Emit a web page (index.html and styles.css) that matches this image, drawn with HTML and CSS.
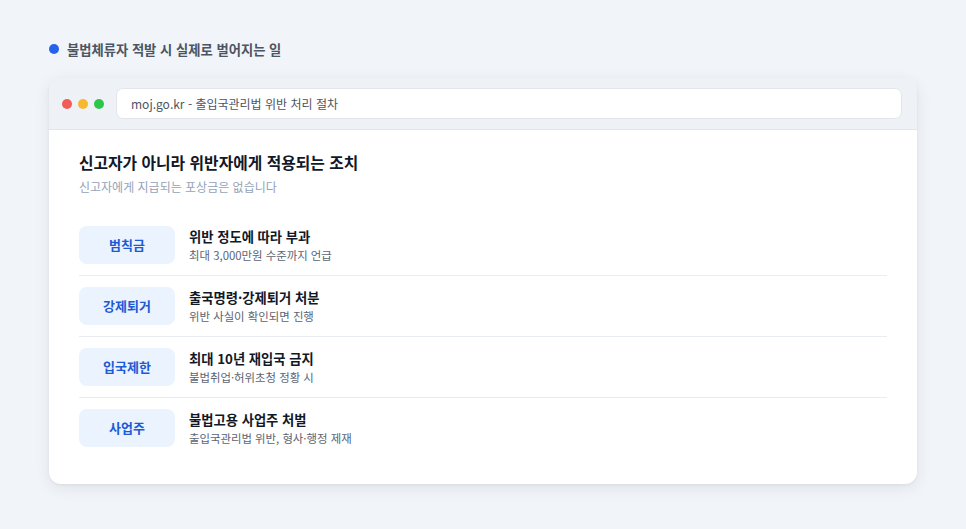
FILE: index.html
```html
<!DOCTYPE html>
<html lang="ko">
<head>
    <meta charset="UTF-8">
    <meta name="viewport" content="width=device-width, initial-scale=1.0">
    <title>불법체류자 적발 시 실제로 벌어지는 일</title>
    <link rel="stylesheet" href="styles.css">
</head>
<body>
<div class="label">
    <span class="label-dot"></span>
    <span>불법체류자 적발 시 실제로 벌어지는 일</span>
</div>

<div class="window">
    <div class="titlebar">
        <div class="dots">
            <span class="dot red"></span>
            <span class="dot yellow"></span>
            <span class="dot green"></span>
        </div>
        <div class="url">moj.go.kr - 출입국관리법 위반 처리 절차</div>
    </div>

    <div class="content">
        <h2>신고자가 아니라 위반자에게 적용되는 조치</h2>
        <p class="sub">신고자에게 지급되는 포상금은 없습니다</p>

        <ul class="rows">
            <li class="row">
                <span class="badge">범칙금</span>
                <div class="row-text">
                    <strong>위반 정도에 따라 부과</strong>
                    <small>최대 3,000만원 수준까지 언급</small>
                </div>
            </li>
            <li class="row">
                <span class="badge">강제퇴거</span>
                <div class="row-text">
                    <strong>출국명령·강제퇴거 처분</strong>
                    <small>위반 사실이 확인되면 진행</small>
                </div>
            </li>
            <li class="row">
                <span class="badge">입국제한</span>
                <div class="row-text">
                    <strong>최대 10년 재입국 금지</strong>
                    <small>불법취업·허위초청 정황 시</small>
                </div>
            </li>
            <li class="row">
                <span class="badge">사업주</span>
                <div class="row-text">
                    <strong>불법고용 사업주 처벌</strong>
                    <small>출입국관리법 위반, 형사·행정 제재</small>
                </div>
            </li>
        </ul>
    </div>
</div>
</body>
</html>
```

FILE: styles.css
```css
body {
    margin: 0;
    padding: 39px 49px 40px;
    background-color: #f1f4f8;
    font-family: "Noto Sans CJK KR", "Noto Sans", sans-serif;
    color: #111827;
}
.label {
    display: flex;
    align-items: center;
    gap: 8px;
    height: 20px;
    margin-bottom: 19px;
    font-size: 13.3px;
    font-weight: 700;
    color: #4b5563;
}
.label-dot {
    width: 10px;
    height: 10px;
    border-radius: 50%;
    background-color: #2563eb;
}
.window {
    background-color: #fff;
    border-radius: 12px;
    overflow: hidden;
    box-shadow: 0 4px 16px rgba(15, 23, 42, 0.08), 0 1px 3px rgba(15, 23, 42, 0.05);
}
.titlebar {
    display: flex;
    align-items: center;
    gap: 12px;
    padding: 10px 15px 10px 13px;
    background-color: #eef1f5;
    border-bottom: 1px solid #e2e6ec;
}
.dots {
    display: flex;
    gap: 6px;
}
.dot {
    width: 10px;
    height: 10px;
    border-radius: 50%;
}
.red { background-color: #f25b57; }
.yellow { background-color: #f7b92f; }
.green { background-color: #2cc74a; }
.url {
    flex: 1;
    height: 31px;
    line-height: 29px;
    box-sizing: border-box;
    padding: 0 14px;
    background-color: #fff;
    border: 1px solid #e2e6ec;
    border-radius: 7px;
    font-size: 12px;
    color: #4b5563;
}
.content {
    padding: 21px 30px 26px;
}
h2 {
    margin: 0;
    font-size: 15.8px;
    line-height: 24px;
    font-weight: 700;
    color: #111827;
}
.sub {
    margin: 3px 0 19px;
    font-size: 12px;
    line-height: 18px;
    color: #94a3b8;
}
.rows {
    list-style: none;
    margin: 0;
    padding: 0;
}
.row {
    display: flex;
    align-items: center;
    gap: 14px;
    padding: 11px 0;
    border-bottom: 1px solid #e9edf2;
}
.row:last-child {
    border-bottom: none;
}
.badge {
    width: 96px;
    height: 38px;
    line-height: 38px;
    flex-shrink: 0;
    text-align: center;
    border-radius: 8px;
    background-color: #eaf3fe;
    color: #1d5ad6;
    font-size: 13px;
    font-weight: 700;
}
.row-text {
    display: flex;
    flex-direction: column;
}
.row-text strong {
    font-size: 13.3px;
    line-height: 20px;
    color: #111827;
}
.row-text small {
    font-size: 11.4px;
    line-height: 17px;
    color: #5b6472;
}
```
